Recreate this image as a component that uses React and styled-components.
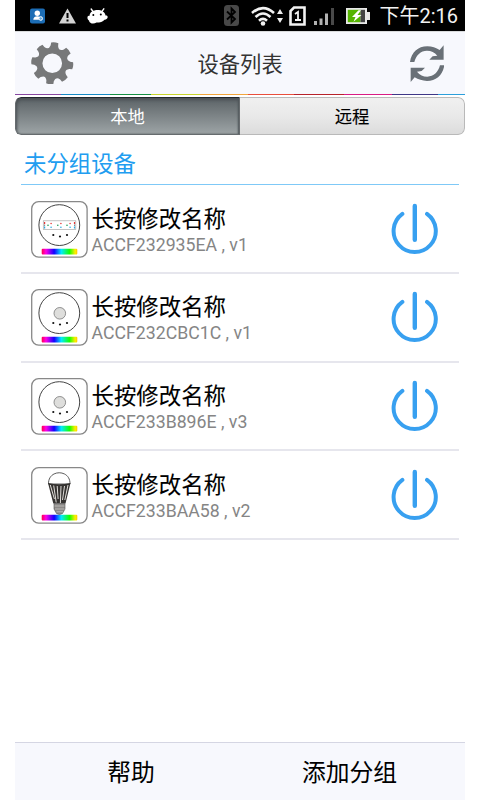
import React from "react";
import styled, { createGlobalStyle } from "styled-components";

const cjk = '"Noto Sans CJK SC", sans-serif';

const GlobalStyle = createGlobalStyle`
  * { box-sizing: border-box; }
  body { margin: 0; background: #fff; }
  svg { display: block; flex: none; }
`;

const Screen = styled.main`
  display: flex;
  flex-direction: column;
  width: 450px;
  height: 800px;
  margin-left: 15px;
  overflow: hidden;
  background: #fff;
  font-family: Roboto, ${cjk};
`;

const StatusBar = styled.div`
  display: flex;
  align-items: center;
  flex: none;
  height: 31px;
  padding: 0 7px 0 15px;
  background: #000;
`;

const StatusIcon = styled.svg`
  margin-left: ${(p) => p.$gap || 0}px;
`;

const Clock = styled.span`
  margin-left: auto;
  padding-top: 2px;
  color: #f2f2f2;
  font: 20px/29px Roboto, ${cjk};
  white-space: nowrap;
`;

const Header = styled.header`
  display: flex;
  align-items: center;
  justify-content: space-between;
  flex: none;
  height: 63px;
  padding: 0 21px 0 16px;
  border-top: 1px solid #d9dbdc;
  background: #f7f8fd;
`;

const Title = styled.h1`
  margin: 0 3px 0 0;
  color: #333;
  font: 400 21.3px/32px ${cjk};
`;

const Stripes = styled.div`
  display: flex;
  flex: none;
  height: 1px;
`;

const Stripe = styled.i`
  flex: ${(p) => p.$span} 0 0;
  background: ${(p) => p.$color};
`;

const Tabs = styled.div`
  display: flex;
  flex: none;
  height: 38px;
  margin-top: 2px;
  border-radius: 6px;
  overflow: hidden;
`;

const Tab = styled.button`
  width: 50%;
  padding: 0;
  border: 1.5px solid ${(p) => (p.$active ? "#666b6e" : "#b9b9b9")};
  border-top-color: ${(p) => (p.$active ? "#22272c" : "#b9b9b9")};
  border-left-width: ${(p) => (p.$active ? "1.5px" : "0")};
  border-radius: ${(p) => (p.$active ? "6px 0 0 6px" : "0 7px 7px 0")};
  background: ${(p) =>
    p.$active
      ? "linear-gradient(#5b6266, #70777a 30%, #9da4a6)"
      : "linear-gradient(#f0f0f0, #e9e9e9 50%, #dcdcdc)"};
  box-shadow: ${(p) => (p.$active ? "inset 1px 2px 3px #4b5155, inset -1px 0 2px #51575b" : "none")};
  color: ${(p) => (p.$active ? "#fff" : "#000")};
  font: 400 17.3px/24px ${cjk};
  -webkit-text-stroke: ${(p) => (p.$active ? "0" : "0.1px #000")};
`;

const GroupTitle = styled.h2`
  flex: none;
  height: 50px;
  margin: 0 6px;
  padding-left: 3px;
  border-bottom: 1px solid #7fc9f7;
  color: #219df0;
  font: 400 22.4px/55px ${cjk};
`;

const DeviceList = styled.ul`
  flex: 1;
  margin: 0 6px;
  padding: 0;
  list-style: none;
`;

const DeviceRow = styled.li`
  display: flex;
  align-items: flex-start;
  height: 88.75px;
  padding: 15.5px 20px 0 10px;
  border-bottom: 2px solid #e6e6ed;
`;

const DeviceText = styled.div`
  flex: 1;
  padding-left: 3.6px;
`;

const DeviceName = styled.div`
  height: 31px;
  color: #000;
  font: 400 22.4px/32px ${cjk};
  -webkit-text-stroke: 0.1px #000;
`;

const DeviceId = styled.div`
  color: #858585;
  font: 400 17.7px/26px Roboto, sans-serif;
  white-space: pre;
`;

const Footer = styled.footer`
  display: flex;
  flex: none;
  height: 58px;
  border-top: 1px solid #d5d6e3;
  background: #f7f8fd;
`;

const FooterButton = styled.button`
  width: ${(p) => p.$width}px;
  padding: 0 0 2px;
  border: 0;
  background: none;
  color: #000;
  font: 400 23.8px/34px ${cjk};
`;

const stripes = [
  [46, "#8747a0"], [48.5, "#168ac5"], [41, "#149044"], [49.5, "#c8d42d"], [48, "#f2a53c"],
  [46, "#e94e3c"], [50, "#b7222b"], [48, "#d91b84"], [46, "#3e3787"], [27, "#2c9fdb"],
];

function gearPath() {
  const at = (deg, r) => {
    const a = (deg * Math.PI) / 180;
    return `${(21 + r * Math.cos(a)).toFixed(2)} ${(21 + r * Math.sin(a)).toFixed(2)}`;
  };
  let d = "";
  for (let i = 0; i < 8; i += 1) {
    const c = i * 45 + 7;
    d += `${i ? "L" : "M"}${at(c - 10, 20.6)} Q${at(c, 21.4)} ${at(c + 10, 20.6)}`;
    d += `L${at(c + 12, 17.8)} Q${at(c + 22.5, 13.2)} ${at(c + 33, 17.8)}`;
  }
  return `${d}Z M30.7 21a9.7 9.7 0 1 0-19.4 0a9.7 9.7 0 1 0 19.4 0Z`;
}

const GearIcon = () => (
  <svg width="42.5" height="42.5" viewBox="0 0 42 42">
    <path d={gearPath()} fill="#777879" fillRule="evenodd" />
  </svg>
);

const refreshArrow =
  "M570 187C574 158 594 140 622 140Q643 141 659 151L671 137V180H628L638 170L652 168Q640 153 621 153C602 153 588 167 583 187Z";

const RefreshIcon = () => (
  <svg width="34.3" height="38" viewBox="570 133 103 114" fill="#697077">
    <path d={refreshArrow} />
    <path d={refreshArrow} transform="rotate(180 621.5 192)" />
  </svg>
);

const PowerIcon = () => (
  <svg width="48" height="54" viewBox="0 0 48 54" fill="none" stroke="#38a0f0" strokeLinecap="round">
    <path d="M11.4 12.8A21.1 21.1 0 1 0 36 12.8" strokeWidth="4" />
    <path d="M23.8 5V38.8" strokeWidth="4.4" />
  </svg>
);

const Rainbow = () => (
  <>
    <defs>
      <linearGradient id="rainbow">
        <stop offset="0" stopColor="#ff0048" />
        <stop offset=".12" stopColor="#ff00e8" />
        <stop offset=".35" stopColor="#1200ff" />
        <stop offset=".55" stopColor="#00eaff" />
        <stop offset=".78" stopColor="#16ff00" />
        <stop offset=".94" stopColor="#ffee00" />
        <stop offset="1" stopColor="#ffc800" />
      </linearGradient>
    </defs>
    <rect x="10.7" y="47.8" width="35.6" height="5.7" rx="1" fill="url(#rainbow)" />
  </>
);

const Dots = () => (
  <g fill="#111">
    <circle cx="22.3" cy="34" r="1.1" />
    <circle cx="29" cy="35.5" r="1.1" />
    <circle cx="36" cy="34" r="1.1" />
  </g>
);

const StripModule = () => (
  <>
    <circle cx="28.3" cy="24.1" r="20.4" fill="#fff" stroke="#444" strokeWidth="1" />
    <rect x="12.3" y="19.8" width="32.5" height="8.8" fill="#fff" stroke="#aaa" strokeWidth=".7" />
    {[18.6, 28.4, 37.6].map((x) => (
      <g key={x}>
        <circle cx={x - 1.6} cy="24.3" r=".8" fill="#189b55" />
        <circle cx={x + 1.5} cy="22.5" r=".8" fill="#e43838" />
        <circle cx={x + 1.5} cy="26.2" r=".8" fill="#2ba8e0" />
      </g>
    ))}
    {[13.6, 43.5].map((x) => (
      <g key={x}>
        <path d={`M${x} 21v2`} stroke="#e43838" strokeWidth="1.2" />
        <path d={`M${x} 23.5v1.5`} stroke="#888" strokeWidth="1" />
        <path d={`M${x} 25.5v2`} stroke="#2ba8e0" strokeWidth="1.2" />
      </g>
    ))}
    <Dots />
  </>
);

const RoundModule = () => (
  <>
    <circle cx="28.3" cy="24.1" r="20.4" fill="#fff" stroke="#444" strokeWidth="1" />
    <circle cx="28.8" cy="24.3" r="5.8" fill="#dededc" stroke="#777" strokeWidth=".8" />
    <Dots />
  </>
);

const BulbModule = () => (
  <>
    <path d="M17.5 17C17 2 39.5 2 39 17Z" fill="#fff" stroke="#333" strokeWidth=".8" />
    <path d="M17 16Q28 18.5 39.5 16L34.5 36.5H22.3Z" fill="#353331" />
    <path d="M19.3 18l4.1 14M22.7 18.5l2.5 17M26.2 19l.9 13M30 19l-.6 17M33.5 19l-2 14M37 18l-3.2 15" stroke="#e1deda" strokeWidth="1" />
    <path d="M23 36.5H34V42L31.5 46.5Q28.5 48.5 25.5 46.5L23 42Z" fill="#8c8a88" stroke="#555" strokeWidth=".6" />
    <path d="M23.5 39h10M24 42h9.5M25.5 44.8h6.5" stroke="#c6c4c2" strokeWidth=".8" />
  </>
);

const modules = { strip: StripModule, round: RoundModule, bulb: BulbModule };

const DeviceIcon = ({ kind }) => {
  const Module = modules[kind];
  return (
    <svg width="57" height="57" viewBox="0 0 57 57">
      <rect x=".7" y=".7" width="55.4" height="55.4" rx="7" fill="#fff" stroke="#888" strokeWidth="1.3" />
      <Rainbow />
      <Module />
    </svg>
  );
};

const devices = [
  { kind: "strip", id: "ACCF232935EA , v1" },
  { kind: "round", id: "ACCF232CBC1C , v1" },
  { kind: "round", id: "ACCF233B896E , v3" },
  { kind: "bulb", id: "ACCF233BAA58 , v2" },
];

const StatusIcons = () => (
  <>
    <StatusIcon width="15" height="16" viewBox="0 0 15 16">
      <rect y=".5" width="15" height="15" rx="2" fill="#1c6db5" />
      <circle cx="7.3" cy="5.2" r="2.7" fill="#fff" />
      <path d="M3.3 11.7c0-4.5 7-4.5 7.5-1.2l-2.3 1.2Z" fill="#fff" />
      <circle cx="10.7" cy="10.5" r="1.8" fill="#5da4da" stroke="#fff" />
    </StatusIcon>
    <StatusIcon $gap={14} width="17" height="16" viewBox="0 0 17 16">
      <path d="M8.5.5 17 15.5H0Z" fill="#d3d3d3" />
      <path d="M8.5 5v5M8.5 11.5v2" stroke="#000" strokeWidth="2" />
    </StatusIcon>
    <StatusIcon $gap={11} width="22" height="16" viewBox="0 0 22 16">
      <path
        d="M4.2 1 6 3.6M16.8.8 15 3.4"
        stroke="#fff"
        strokeWidth="1.4"
        strokeLinecap="round"
      />
      <path d="M2.5 8C2.5 0 18 0 18.5 7.5 22 7 21 11.5 17.5 11.8 16 14 13 14.6 9.5 14.6 7 16.2 2.5 16 2 12.5-.3 11.5 0 7 2.5 8Z" fill="#fff" />
      <circle cx="6.3" cy="7" r="1" />
      <circle cx="13.8" cy="6.6" r="1" />
    </StatusIcon>
    <StatusIcon $gap={115} width="15" height="21" viewBox="0 0 15 21">
      <rect width="15" height="21" rx="3.5" fill="#484848" />
      <path d="M3 6.5 11 14 7.5 17.5V3.5L11 7 3 14.5" fill="none" stroke="#000" strokeWidth="1.8" />
    </StatusIcon>
    <StatusIcon $gap={12} width="24" height="20" viewBox="0 0 24 20" fill="none" stroke="#f2f2f2" strokeWidth="2.6">
      <path d="M1 7Q12-2.8 23 7M4.5 11Q12 4 19.5 11M8 14.7Q12 11 16 14.7" />
      <circle cx="12" cy="17.5" r="2.3" fill="#f2f2f2" stroke="none" />
    </StatusIcon>
    <StatusIcon $gap={2} width="6" height="16" viewBox="0 0 6 16" fill="#eee">
      <path d="M3 1 6 6H0ZM3 15 0 10H6Z" />
    </StatusIcon>
    <StatusIcon $gap={6} width="17" height="20" viewBox="0 0 17 20">
      <path d="M5 1.5H15.5V18.5H1.5V5Z" fill="#000" stroke="#f2f2f2" strokeWidth="2.6" />
      <path d="M6 8 9 6V14.5M6 14H12" fill="none" stroke="#f2f2f2" strokeWidth="1.8" />
    </StatusIcon>
    <StatusIcon $gap={8} width="21" height="18" viewBox="0 0 21 18">
      <path d="M0 14h3v4H0ZM5.5 11.5h3V18h-3ZM11 6.5h3V18h-3Z" fill="#b2b2b2" />
      <path d="M17 1h3v17h-3Z" fill="#494949" />
    </StatusIcon>
    <StatusIcon $gap={11} width="24" height="18" viewBox="0 0 24 18">
      <path d="M0 1H21V5H24V13H21V17H0Z" fill="#e8e8e8" />
      <path d="M1.8 2.8H14.5V15.2H1.8Z" fill="#55b400" />
      <path d="M14.5 2.8H19V15.2H14.5Z" fill="#444" />
      <path d="M12.5 3.2 6 10H9.5L7.5 14.8 15.5 8H11.5L15 3.2Z" fill="#fff" />
    </StatusIcon>
  </>
);

export default function App() {
  return (
    <>
      <GlobalStyle />
      <Screen>
        <StatusBar>
          <StatusIcons />
          <Clock>下午2:16</Clock>
        </StatusBar>
        <Header>
          <GearIcon />
          <Title>设备列表</Title>
          <RefreshIcon />
        </Header>
        <Stripes>
          {stripes.map(([span, color]) => (
            <Stripe key={color} $span={span} $color={color} />
          ))}
        </Stripes>
        <Tabs>
          <Tab $active>本地</Tab>
          <Tab>远程</Tab>
        </Tabs>
        <GroupTitle>未分组设备</GroupTitle>
        <DeviceList>
          {devices.map((device) => (
            <DeviceRow key={device.id}>
              <DeviceIcon kind={device.kind} />
              <DeviceText>
                <DeviceName>长按修改名称</DeviceName>
                <DeviceId>{device.id}</DeviceId>
              </DeviceText>
              <PowerIcon />
            </DeviceRow>
          ))}
        </DeviceList>
        <Footer>
          <FooterButton $width={232}>帮助</FooterButton>
          <FooterButton $width={205}>添加分组</FooterButton>
        </Footer>
      </Screen>
    </>
  );
}
